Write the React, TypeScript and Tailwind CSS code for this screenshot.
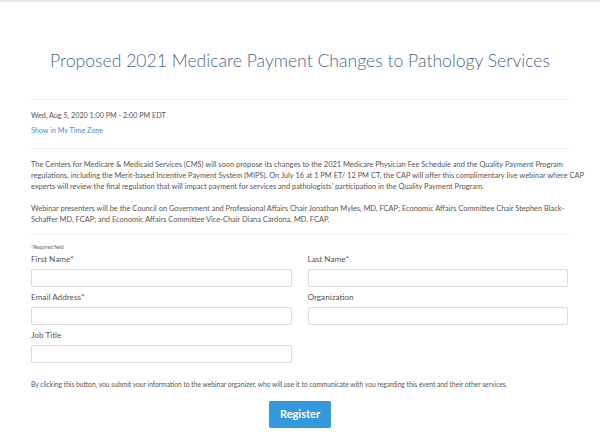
const Field = ({ label }: { label: string }) => (
  <div className="flex flex-col">
    <label className="text-[8.2px] text-[#555] leading-[10px] mb-[5px]">{label}</label>
    <input className="h-[18px] w-full border border-[#dcdcdc] rounded-[2px] bg-white outline-none" />
  </div>
);

const App = () => (
  <div className="w-[600px] h-[440px] bg-white border-t-2 border-[#e8e8e8] overflow-hidden font-['Lato','Liberation_Sans',sans-serif]">
    <div className="mx-[31px]">
      {/* Title */}
      <div className="h-[98px] flex items-center justify-center border-b border-[#f1f1f1] pt-[22px]">
        <h1 className="text-[17.6px] font-light text-[#4a6788] whitespace-nowrap">
          Proposed 2021 Medicare Payment Changes to Pathology Services
        </h1>
      </div>

      {/* Date */}
      <div className="border-b border-[#f1f1f1] pt-[11px] pb-[12px]">
        <p className="text-[7.2px] leading-[10px] text-[#555]">Wed, Aug 5, 2020 1:00 PM - 2:00 PM EDT</p>
        <p className="text-[7.2px] leading-[10px] text-[#3b8fd4] mt-[5px]">Show in My Time Zone</p>
      </div>

      {/* Description */}
      <div className="border-b border-[#f1f1f1] pt-[10px] pb-[9px] text-[7.45px] leading-[11px] text-[#555] whitespace-nowrap">
        <p>
          The Centers for Medicare &amp; Medicaid Services (CMS) will soon propose its changes to the 2021 Medicare Physician Fee Schedule and the Quality Payment Program
          <br />
          regulations, including the Merit-based Incentive Payment System (MIPS). On July 16 at 1 PM ET/ 12 PM CT, the CAP will offer this complimentary live webinar where CAP
          <br />
          experts will review the final regulation that will impact payment for services and pathologists’ participation in the Quality Payment Program.
        </p>
        <p className="mt-[11px]">
          Webinar presenters will be the Council on Government and Professional Affairs Chair Jonathan Myles, MD, FCAP; Economic Affairs Committee Chair Stephen Black-
          <br />
          Schaffer MD, FCAP; and Economic Affairs Committee Vice-Chair Diana Cardona, MD, FCAP.
        </p>
      </div>

      {/* Form */}
      <div className="pt-[8px]">
        <p className="text-[5px] leading-[8px] text-[#666]">*Required field</p>
        <div className="grid grid-cols-2 gap-x-[16px] gap-y-[5px] mt-[3px] pr-[1px]">
          <Field label="First Name*" />
          <Field label="Last Name*" />
          <Field label="Email Address*" />
          <Field label="Organization" />
          <Field label="Job Title" />
        </div>
        <p className="text-[6.7px] leading-[10px] text-[#555] mt-[16px] whitespace-nowrap">
          By clicking this button, you submit your information to the webinar organizer, who will use it to communicate with you regarding this event and their other services.
        </p>
        <div className="flex justify-center mt-[12px]">
          <button className="w-[62px] h-[27px] bg-[#3498dc] text-white text-[11px] font-bold rounded-[2px]">
            Register
          </button>
        </div>
      </div>
    </div>
  </div>
);

export default App;
